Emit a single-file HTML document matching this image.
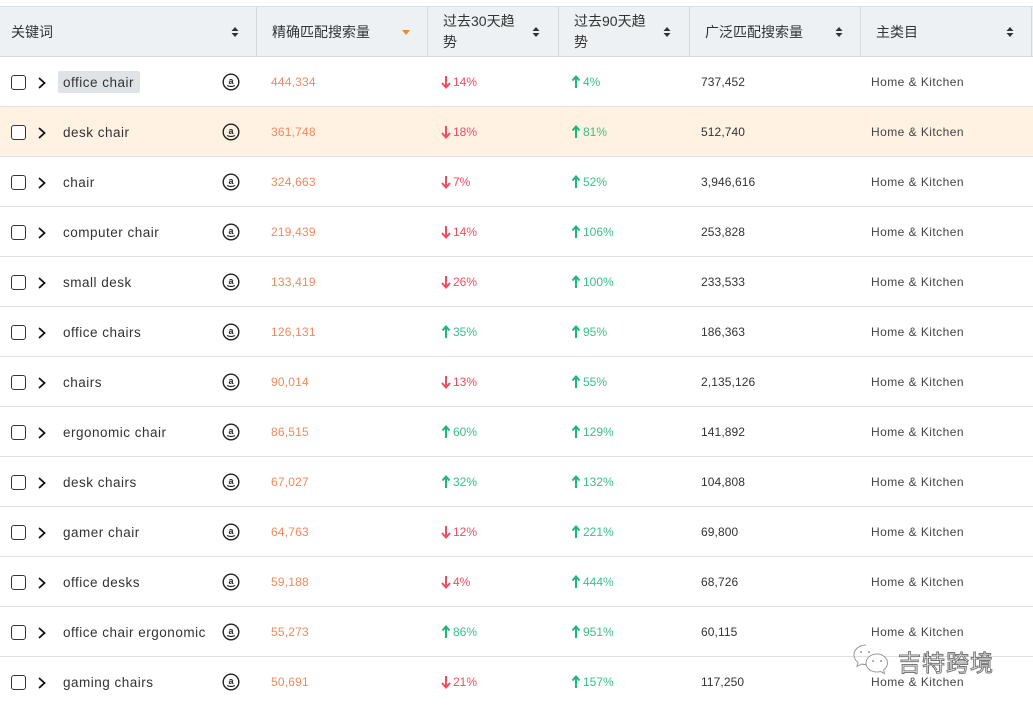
<!DOCTYPE html>
<html><head><meta charset="utf-8"><style>
*{margin:0;padding:0;box-sizing:border-box}
body{width:1033px;height:706px;overflow:hidden;background:#fff;font-family:"Liberation Sans","Noto Sans CJK SC",sans-serif;position:relative}
.hd{position:absolute;left:0;top:6px;width:1033px;height:51px;background:#eef1f3;border-top:1px solid #d9dfe3;border-bottom:1px solid #d3d9de}
.hd .c{position:absolute;top:0;height:50px;border-right:1px solid #d3d9de}
.hd .t{position:absolute;font-size:14px;color:#333;line-height:21px}
.srt{position:absolute;width:8px;height:12px}
.r{position:absolute;left:0;width:1033px;height:50px;border-bottom:1px solid #dde1e4}
.r span{position:absolute;top:1px;line-height:49px;white-space:nowrap}
.cb{position:absolute;left:11px;top:18px;width:15px;height:15px;border:1.3px solid #333;border-radius:3px;background:#fff}
.ch{position:absolute;left:36px;top:19px}
.kw{left:63px;font-size:13.5px;color:#333;letter-spacing:.5px}
.az{position:absolute;left:222px;top:16px}
.ex{left:271px;font-size:12px;color:#f08a5d;letter-spacing:.2px}
.dn{color:#ee4d64;font-size:12px}
.up{color:#3cbf8a;font-size:12px}
.t30{left:441px}.t90{left:571px}
.br{left:701px;font-size:12px;color:#333;letter-spacing:.1px}
.ca{left:871px;font-size:12px;color:#444;letter-spacing:.45px}
.ar{display:inline-block;vertical-align:middle;margin-right:2px;margin-top:-2px}
</style></head><body>
<svg width="0" height="0" style="position:absolute"><defs>
<symbol id="dn" viewBox="0 0 10 14"><path d="M5 1V12M1 8L5 12.5L9 8" stroke="#ee4d64" stroke-width="2" fill="none"/></symbol>
<symbol id="up" viewBox="0 0 10 14"><path d="M5 13V2M1.5 5.5L5 1.5L8.5 5.5" stroke="#1fb67a" stroke-width="2" fill="none"/></symbol>
<symbol id="az" viewBox="0 0 18 18"><circle cx="9" cy="9" r="7.8" fill="none" stroke="#222" stroke-width="1.4"/><text x="9" y="11" font-size="9" font-family="Liberation Sans" font-weight="bold" text-anchor="middle" fill="#222">a</text><path d="M5 12.5Q9 14.5 13 12.5" stroke="#222" stroke-width="1.2" fill="none"/></symbol>
<symbol id="ch" viewBox="0 0 12 14"><path d="M3 2L8.5 7L3 12" stroke="#111" stroke-width="1.8" fill="none"/></symbol>
<symbol id="st" viewBox="0 0 8 12"><path d="M4 1L7.5 5H0.5Z M4 11L7.5 7H0.5Z" fill="#333"/></symbol>
</defs></svg>
<div class="hd">
<div class="c" style="left:0;width:257px"></div>
<div class="c" style="left:257px;width:171px"></div>
<div class="c" style="left:428px;width:131px"></div>
<div class="c" style="left:559px;width:131px"></div>
<div class="c" style="left:690px;width:171px"></div>
<div class="c" style="left:861px;width:171px"></div>
<div class="t" style="left:11px;top:15px">关键词</div>
<svg class="srt" style="left:231px;top:19px"><use href="#st"/></svg>
<div class="t" style="left:272px;top:15px">精确匹配搜索量</div>
<svg style="position:absolute;left:402px;top:23px" width="8" height="6"><path d="M0 0H8L4 5Z" fill="#f08a24"/></svg>
<div class="t" style="left:443px;top:4px">过去30天趋<br>势</div>
<svg class="srt" style="left:532px;top:19px"><use href="#st"/></svg>
<div class="t" style="left:574px;top:4px">过去90天趋<br>势</div>
<svg class="srt" style="left:663px;top:19px"><use href="#st"/></svg>
<div class="t" style="left:705px;top:15px">广泛匹配搜索量</div>
<svg class="srt" style="left:835px;top:19px"><use href="#st"/></svg>
<div class="t" style="left:876px;top:15px">主类目</div>
<svg class="srt" style="left:1006px;top:19px"><use href="#st"/></svg>
</div>

<div class="r" style="top:57px"><i class="cb"></i><svg class="ch" width="12" height="14"><use href="#ch"/></svg><div style="position:absolute;left:58px;top:14px;width:82px;height:22px;background:#dfe3e6;border-radius:2px"></div><span class="kw">office chair</span><svg class="az" width="18" height="18"><use href="#az"/></svg><span class="ex">444,334</span><span class="t30 dn"><svg class="ar" width="10" height="14"><use href="#dn"/></svg>14%</span><span class="t90 up"><svg class="ar" width="10" height="14"><use href="#up"/></svg>4%</span><span class="br">737,452</span><span class="ca">Home &amp; Kitchen</span></div>
<div class="r" style="top:107px;background:#fff2e3"><i class="cb"></i><svg class="ch" width="12" height="14"><use href="#ch"/></svg><span class="kw">desk chair</span><svg class="az" width="18" height="18"><use href="#az"/></svg><span class="ex">361,748</span><span class="t30 dn"><svg class="ar" width="10" height="14"><use href="#dn"/></svg>18%</span><span class="t90 up"><svg class="ar" width="10" height="14"><use href="#up"/></svg>81%</span><span class="br">512,740</span><span class="ca">Home &amp; Kitchen</span></div>
<div class="r" style="top:157px"><i class="cb"></i><svg class="ch" width="12" height="14"><use href="#ch"/></svg><span class="kw">chair</span><svg class="az" width="18" height="18"><use href="#az"/></svg><span class="ex">324,663</span><span class="t30 dn"><svg class="ar" width="10" height="14"><use href="#dn"/></svg>7%</span><span class="t90 up"><svg class="ar" width="10" height="14"><use href="#up"/></svg>52%</span><span class="br">3,946,616</span><span class="ca">Home &amp; Kitchen</span></div>
<div class="r" style="top:207px"><i class="cb"></i><svg class="ch" width="12" height="14"><use href="#ch"/></svg><span class="kw">computer chair</span><svg class="az" width="18" height="18"><use href="#az"/></svg><span class="ex">219,439</span><span class="t30 dn"><svg class="ar" width="10" height="14"><use href="#dn"/></svg>14%</span><span class="t90 up"><svg class="ar" width="10" height="14"><use href="#up"/></svg>106%</span><span class="br">253,828</span><span class="ca">Home &amp; Kitchen</span></div>
<div class="r" style="top:257px"><i class="cb"></i><svg class="ch" width="12" height="14"><use href="#ch"/></svg><span class="kw">small desk</span><svg class="az" width="18" height="18"><use href="#az"/></svg><span class="ex">133,419</span><span class="t30 dn"><svg class="ar" width="10" height="14"><use href="#dn"/></svg>26%</span><span class="t90 up"><svg class="ar" width="10" height="14"><use href="#up"/></svg>100%</span><span class="br">233,533</span><span class="ca">Home &amp; Kitchen</span></div>
<div class="r" style="top:307px"><i class="cb"></i><svg class="ch" width="12" height="14"><use href="#ch"/></svg><span class="kw">office chairs</span><svg class="az" width="18" height="18"><use href="#az"/></svg><span class="ex">126,131</span><span class="t30 up"><svg class="ar" width="10" height="14"><use href="#up"/></svg>35%</span><span class="t90 up"><svg class="ar" width="10" height="14"><use href="#up"/></svg>95%</span><span class="br">186,363</span><span class="ca">Home &amp; Kitchen</span></div>
<div class="r" style="top:357px"><i class="cb"></i><svg class="ch" width="12" height="14"><use href="#ch"/></svg><span class="kw">chairs</span><svg class="az" width="18" height="18"><use href="#az"/></svg><span class="ex">90,014</span><span class="t30 dn"><svg class="ar" width="10" height="14"><use href="#dn"/></svg>13%</span><span class="t90 up"><svg class="ar" width="10" height="14"><use href="#up"/></svg>55%</span><span class="br">2,135,126</span><span class="ca">Home &amp; Kitchen</span></div>
<div class="r" style="top:407px"><i class="cb"></i><svg class="ch" width="12" height="14"><use href="#ch"/></svg><span class="kw">ergonomic chair</span><svg class="az" width="18" height="18"><use href="#az"/></svg><span class="ex">86,515</span><span class="t30 up"><svg class="ar" width="10" height="14"><use href="#up"/></svg>60%</span><span class="t90 up"><svg class="ar" width="10" height="14"><use href="#up"/></svg>129%</span><span class="br">141,892</span><span class="ca">Home &amp; Kitchen</span></div>
<div class="r" style="top:457px"><i class="cb"></i><svg class="ch" width="12" height="14"><use href="#ch"/></svg><span class="kw">desk chairs</span><svg class="az" width="18" height="18"><use href="#az"/></svg><span class="ex">67,027</span><span class="t30 up"><svg class="ar" width="10" height="14"><use href="#up"/></svg>32%</span><span class="t90 up"><svg class="ar" width="10" height="14"><use href="#up"/></svg>132%</span><span class="br">104,808</span><span class="ca">Home &amp; Kitchen</span></div>
<div class="r" style="top:507px"><i class="cb"></i><svg class="ch" width="12" height="14"><use href="#ch"/></svg><span class="kw">gamer chair</span><svg class="az" width="18" height="18"><use href="#az"/></svg><span class="ex">64,763</span><span class="t30 dn"><svg class="ar" width="10" height="14"><use href="#dn"/></svg>12%</span><span class="t90 up"><svg class="ar" width="10" height="14"><use href="#up"/></svg>221%</span><span class="br">69,800</span><span class="ca">Home &amp; Kitchen</span></div>
<div class="r" style="top:557px"><i class="cb"></i><svg class="ch" width="12" height="14"><use href="#ch"/></svg><span class="kw">office desks</span><svg class="az" width="18" height="18"><use href="#az"/></svg><span class="ex">59,188</span><span class="t30 dn"><svg class="ar" width="10" height="14"><use href="#dn"/></svg>4%</span><span class="t90 up"><svg class="ar" width="10" height="14"><use href="#up"/></svg>444%</span><span class="br">68,726</span><span class="ca">Home &amp; Kitchen</span></div>
<div class="r" style="top:607px"><i class="cb"></i><svg class="ch" width="12" height="14"><use href="#ch"/></svg><span class="kw">office chair ergonomic</span><svg class="az" width="18" height="18"><use href="#az"/></svg><span class="ex">55,273</span><span class="t30 up"><svg class="ar" width="10" height="14"><use href="#up"/></svg>86%</span><span class="t90 up"><svg class="ar" width="10" height="14"><use href="#up"/></svg>951%</span><span class="br">60,115</span><span class="ca">Home &amp; Kitchen</span></div>
<div class="r" style="top:657px;border-bottom:none"><i class="cb"></i><svg class="ch" width="12" height="14"><use href="#ch"/></svg><span class="kw">gaming chairs</span><svg class="az" width="18" height="18"><use href="#az"/></svg><span class="ex">50,691</span><span class="t30 dn"><svg class="ar" width="10" height="14"><use href="#dn"/></svg>21%</span><span class="t90 up"><svg class="ar" width="10" height="14"><use href="#up"/></svg>157%</span><span class="br">117,250</span><span class="ca">Home &amp; Kitchen</span></div>

<svg style="position:absolute;left:852px;top:643px" width="44" height="34" viewBox="0 0 44 34"><path d="M14 2C7 2 2 6.5 2 12c0 3 1.5 5.5 4 7.5l-1 4 4.5-2.5c1.3.4 2.8.6 4.5.6" fill="none" stroke="#999" stroke-width="1"/><path d="M25 11c-6 0-11 4-11 9s5 9 11 9c1.3 0 2.5-.2 3.5-.5l4 2-1-3.5c2.5-1.7 4-4 4-7 0-5-5-9-10.5-9z" fill="#fff" stroke="#999" stroke-width="1"/><circle cx="9" cy="9" r="1" fill="#999"/><circle cx="17" cy="9" r="1" fill="#999"/><circle cx="21" cy="18" r="1" fill="#999"/><circle cx="29" cy="18" r="1" fill="#999"/></svg>
<div style="position:absolute;left:898px;top:646px;font-size:23px;color:#fff;-webkit-text-stroke:1px #777;font-family:'Noto Sans CJK SC',sans-serif;line-height:30px;letter-spacing:1px">吉特跨境</div>
</body></html>
